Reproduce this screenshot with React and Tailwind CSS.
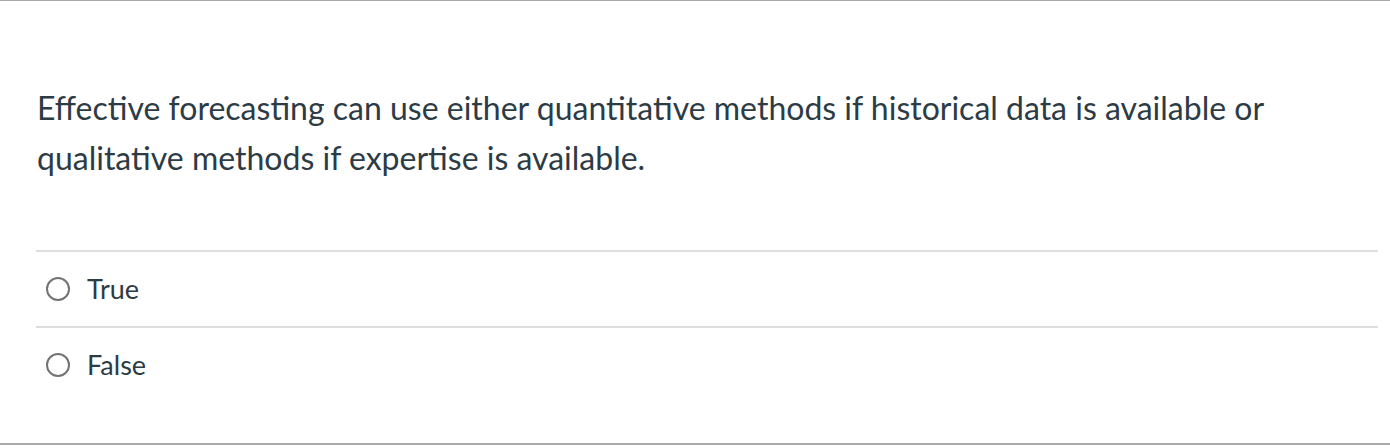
export default function App() {
  const answers = ['True', 'False'];

  return (
    <div
      className="h-[445px] w-full bg-white border-t border-[#a9a9a9] border-b-2 text-[#2d3b45]"
      style={{ fontFamily: 'Lato, "Open Sans", sans-serif' }}
    >
      <div className="pt-[82px] pl-[37px] pr-[12px] text-[32px] leading-[50px]">
        Effective forecasting can use either quantitative methods if historical data is available or
        qualitative methods if expertise is available.
      </div>

      <div className="mt-[67px] ml-[36px] mr-[12px]">
        {answers.map((a) => (
          <label
            key={a}
            className="flex h-[76px] items-center border-t-2 border-[#dddddd] pl-[10px]"
          >
            <span className="w-[24px] h-[24px] rounded-full border-2 border-[#737373] bg-white" />
            <span className="ml-[17px] text-[27px]">{a}</span>
          </label>
        ))}
      </div>
    </div>
  );
}
